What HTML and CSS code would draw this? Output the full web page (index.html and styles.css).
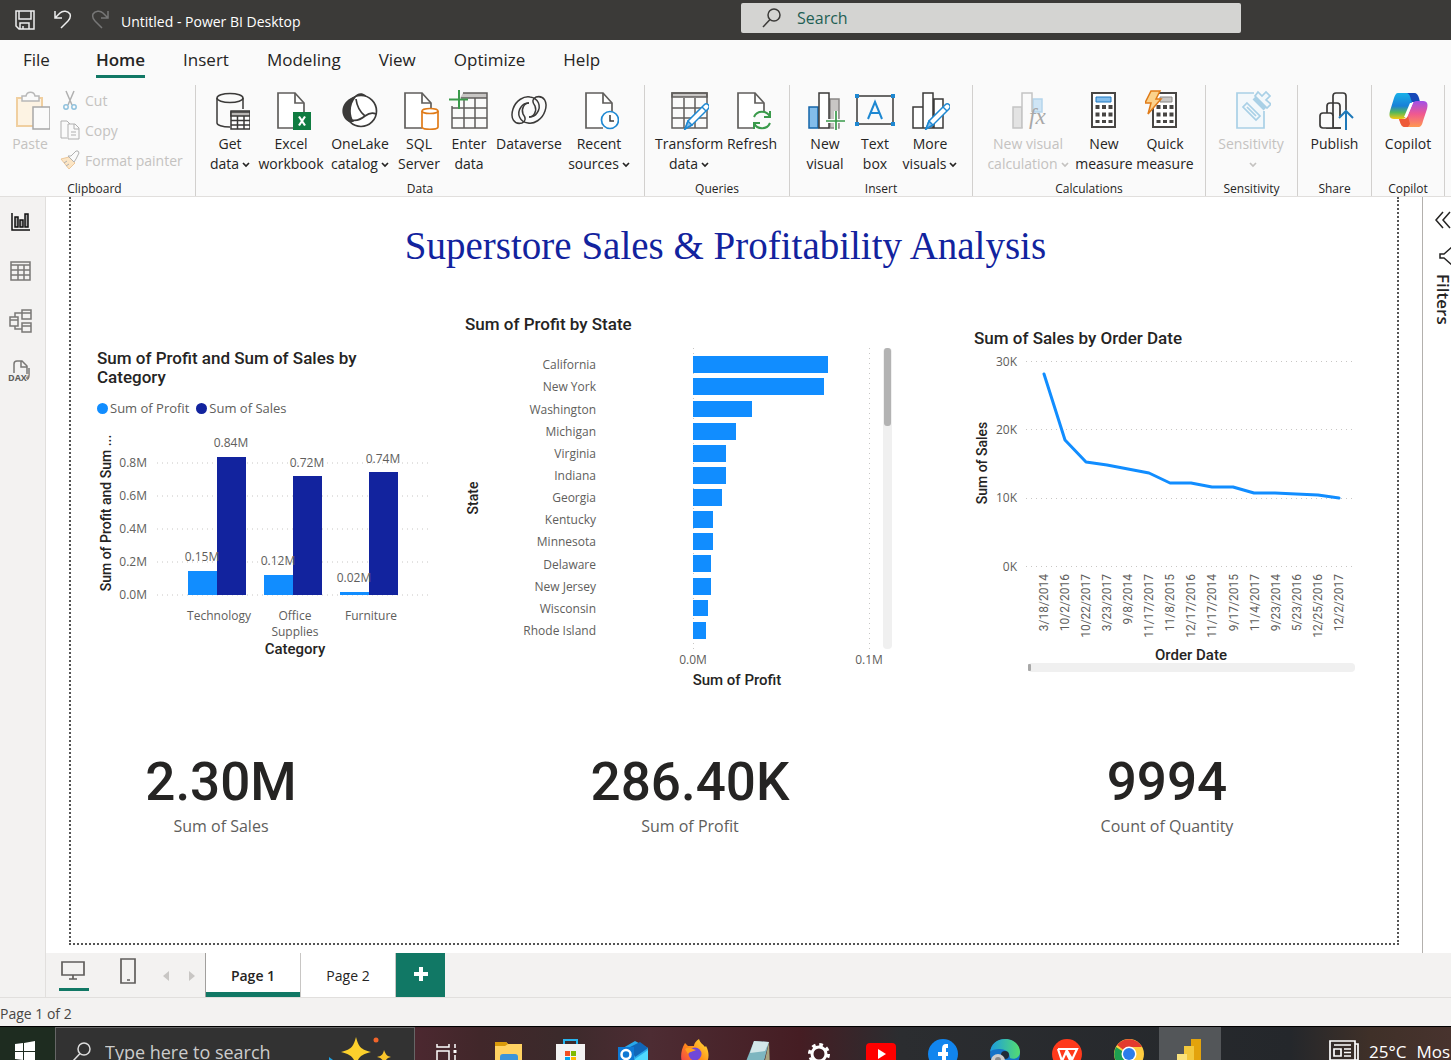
FILE: index.html
```html
<!DOCTYPE html>
<html lang="en">
<head>
<meta charset="utf-8">
<title>Untitled - Power BI Desktop</title>
<link rel="stylesheet" href="styles.css">
</head>
<body>
<svg class="defs" aria-hidden="true">
  <symbol id="chev" viewBox="0 0 8 6"><path d="M1 1l3 3 3-3" fill="none" stroke="currentColor" stroke-width="1.700"/></symbol>
  <symbol id="doc" viewBox="0 0 40 40"><path d="M24 38H7V3h17l9 10v10" fill="#fff" stroke="#605e5c" stroke-width="1.700"/><path d="M24 3v10h9" fill="none" stroke="#605e5c" stroke-width="1.700"/></symbol>
  <symbol id="lens" viewBox="0 0 20 20"><circle cx="12" cy="7" r="6" fill="none" stroke="currentColor" stroke-width="1.500"/><path d="M8 11.500L1 19" stroke="currentColor" stroke-width="1.500"/></symbol>
  <symbol id="pencil" viewBox="0 0 40 40"><path d="M16 39l3-8 16-16c3-3 7 1 4 4L23 35z" fill="#fff" stroke="#1e88d2" stroke-width="1.500"/><path d="M16 39l3-8 4 4z" fill="#83bdeb" stroke="#1e88d2"/><path d="M33 17l4 4" stroke="#1e88d2"/></symbol>
  <symbol id="swirl" viewBox="0 0 40 40"><path d="M13 33c-8 2-12-5-9-14C7 10 15 6 21 7c8 1 12 9 7 16-2 3-5 4-8 4M13 33c4-2 4-5 1-9-2-5 1-11 6-11" fill="none" stroke="#3b3a39" stroke-width="1.500"/></symbol>
</svg>

<header class="titlebar">
  <div class="quick">
    <button aria-label="Save"><svg width="20" height="20" viewBox="0 0 20 20" fill="none" stroke="#eee" stroke-width="1.500"><path d="M1 1h18v18H4l-3-3zM4 1v8h12V1M5 19v-6h9v6M8 16v3"/></svg></button>
    <button aria-label="Undo"><svg width="18" height="20" viewBox="0 0 18 20" fill="none" stroke="#eee" stroke-width="1.500"><path d="M1 1v7h7M1 8l5-5c3-3 8-2 10 1 1 3 0 5-2 7l-7 7"/></svg></button>
    <button aria-label="Redo"><svg width="18" height="20" viewBox="0 0 18 20" fill="none" stroke="#777" stroke-width="1.500"><path d="M17 1v7h-7M17 8l-5-5C9 0 4 1 2 4c-1 3 0 5 2 7l7 7"/></svg></button>
  </div>
  <span class="doc-name">Untitled - Power BI Desktop</span>
  <label class="search"><svg width="20" height="20"><use href="#lens"/></svg><input type="search" placeholder="Search" aria-label="Search"></label>
</header>

<nav class="tabs">
  <a href="#" class="file">File</a><a href="#" class="on">Home</a><a href="#">Insert</a><a href="#">Modeling</a><a href="#">View</a><a href="#">Optimize</a><a href="#">Help</a>
</nav>

<section class="ribbon">
  <div class="group g-clip">
    <div class="tools">
      <button class="tool w60" disabled><svg viewBox="0 0 40 40"><path d="M7 8h25v28H7z" fill="#fdf3e3" stroke="#f0cfa0" stroke-width="2"/><path d="M12 11V6h4c1-5 8-5 9 0h4v5z" fill="#fafafa" stroke="#b8b8b8" stroke-width="1.500"/><path d="M23 17h17v22H23z" fill="#fafafa" stroke="#a8a8a8" stroke-width="1.500"/></svg>Paste</button>
      <div class="stack">
        <button disabled><svg width="20" height="20" viewBox="0 0 20 20" fill="none"><path d="M6 1l6 14M14 1L8 15" stroke="#b0b0b0" stroke-width="1.500"/><circle cx="6" cy="17" r="2.200" stroke="#8fc1dd" stroke-width="1.500"/><circle cx="14" cy="17" r="2.200" stroke="#8fc1dd" stroke-width="1.500"/></svg>Cut</button>
        <button disabled><svg width="20" height="20" viewBox="0 0 20 20" fill="#fafafa" stroke="#b0b0b0"><path d="M7 18H1V1h6l3 3M8 4h7l4 4v11H8zM14 4v5h5M11 12h5M11 15h5"/></svg>Copy</button>
        <button disabled><svg width="20" height="20" viewBox="0 0 20 20"><path d="M1 9l8-2 6 6-6 6z" fill="#fbe5c5" stroke="#ecc79a"/><path d="M8 6l6 6 2-3 3-6-1-2-2 0-5 5zM4 13l3-2M6 16l3-2" fill="#fafafa" stroke="#b0b0b0"/></svg>Format painter</button>
      </div>
    </div>
    <h2>Clipboard</h2>
  </div>

  <div class="group g-data">
    <div class="tools">
      <button class="tool w52"><svg viewBox="0 0 40 40" fill="none" stroke="#3b3a39" stroke-width="1.500"><path d="M20 37C12 37 7 35 7 33V8M33 8v11"/><ellipse cx="20" cy="8" rx="13" ry="4.500"/><path d="M21 21h19v18H21z" fill="#fff"/><path d="M21 22h19v4H21z" fill="#b8b6b4"/><path d="M21 30.500h19M21 35h19M27.500 26v13M34 26v13"/></svg>Get<br><span>data<svg class="chev"><use href="#chev"/></svg></span></button>
      <button class="tool w70"><svg viewBox="0 0 40 40"><use href="#doc"/><path d="M22 22h18v18H22z" fill="#107c41"/><path d="M28 26.500l6 9M34 26.500l-6 9" stroke="#fff" stroke-width="2.200"/></svg>Excel<br>workbook</button>
      <button class="tool w68"><svg viewBox="0 0 40 40"><path d="M14 7c4-6 12-5 15 3z" fill="#3b3a39"/><circle cx="21" cy="21" r="15.500" fill="#fff" stroke="#3b3a39" stroke-width="1.700"/><path d="M14 7C0 11-1 27 9 32h5c-5-8-4-18 2-25z" fill="#3b3a39"/><path d="M16 9c1 8 4 13 9 17M36 24c-4-2-7-1-11 2-5 4-9 5-13 4" fill="none" stroke="#3b3a39" stroke-width="1.700"/></svg>OneLake<br><span>catalog<svg class="chev"><use href="#chev"/></svg></span></button>
      <button class="tool w50"><svg viewBox="0 0 40 40"><use href="#doc" x="-1"/><path d="M23 21v16c0 3 16 3 16 0V21" fill="#fff" stroke="#e07b18" stroke-width="1.700"/><ellipse cx="31" cy="21" rx="8" ry="2.500" fill="#fff" stroke="#e07b18" stroke-width="1.700"/></svg>SQL<br>Server</button>
      <button class="tool w50"><svg viewBox="0 0 40 40" fill="none" stroke="#605e5c" stroke-width="1.500"><path d="M14 3h24v5H11z" fill="#c8c6c4" stroke="none"/><path d="M14 3h24v35H3V16M12 8h26M3 18h35M3 28h35M15 10v28M26 8v30"/><path d="M10 0v19M0 9.500h19" stroke="#3a9a4b" stroke-width="2"/></svg>Enter<br>data</button>
      <button class="tool w70"><svg viewBox="0 0 40 40"><use href="#swirl"/><use href="#swirl" transform="rotate(180 20 20)"/></svg>Dataverse</button>
      <button class="tool w70"><svg viewBox="0 0 40 40"><use href="#doc"/><circle cx="31" cy="30" r="8.500" fill="#fff" stroke="#1e88d2" stroke-width="1.700"/><path d="M31 25v6h4" fill="none" stroke="#3b3a39" stroke-width="1.500"/></svg>Recent<br><span>sources<svg class="chev"><use href="#chev"/></svg></span></button>
    </div>
    <h2>Data</h2>
  </div>

  <div class="group g-query">
    <div class="tools">
      <button class="tool w68"><svg viewBox="0 0 40 40" fill="none" stroke="#605e5c" stroke-width="1.500"><path d="M3 3h35v4H3z" fill="#c8c6c4"/><path d="M3 3h35v35H3zM3 18h35M3 28h35M15 8v30M26 8v30"/><use href="#pencil"/></svg>Transform<br><span>data<svg class="chev"><use href="#chev"/></svg></span></button>
      <button class="tool w58"><svg viewBox="0 0 40 40"><use href="#doc" x="-1"/><circle cx="30" cy="30" r="9" fill="#fafafa"/><path d="M22 27c3-7 13-7 16 0M38 21v6h-6M38 33c-3 7-13 7-16 0M22 39v-6h6" fill="none" stroke="#3a9a4b" stroke-width="2"/></svg>Refresh</button>
    </div>
    <h2>Queries</h2>
  </div>

  <div class="group g-insert">
    <div class="tools">
      <button class="tool w50"><svg viewBox="0 0 40 40" fill="#fff" stroke="#3b3a39" stroke-width="1.500"><path d="M25 9h9v29h-9z" fill="#c8c6c4" stroke="#8a8886"/><path d="M4 17h9v21H4z" fill="#83bdeb" stroke="#1565a9"/><path d="M14 3h10v35H14z"/><path d="M31 21v19M21 31h19" stroke="#fafafa" stroke-width="4"/><path d="M31 21v19M21 31h19" stroke="#3a9a4b" stroke-width="1.700"/></svg>New<br>visual</button>
      <button class="tool w50"><svg viewBox="0 0 40 40"><path d="M2 6h36v28H2z" fill="#fafafa" stroke="#3b3a39" stroke-width="1.500"/><path d="M0 4h4v4H0zM36 4h4v4h-4zM0 32h4v4H0zM36 32h4v4h-4z" fill="#1e88d2"/><path d="M13 29l7-17 7 17M16 23h8" fill="none" stroke="#1e88d2" stroke-width="2"/></svg>Text<br>box</button>
      <button class="tool w60"><svg viewBox="0 0 40 40" fill="#fff" stroke="#3b3a39" stroke-width="1.500"><path d="M24 9h9v29h-9zM3 17h10v21H3zM13 3h10v35H13z"/><use href="#pencil"/></svg>More<br><span>visuals<svg class="chev"><use href="#chev"/></svg></span></button>
    </div>
    <h2>Insert</h2>
  </div>

  <div class="group g-calc">
    <div class="tools">
      <button class="tool w90" disabled><svg viewBox="0 0 40 40" fill="#fafafa" stroke="#c4c4c4" stroke-width="1.500"><path d="M25 9h9v13h-9z" fill="#cfe5f5" stroke="#b5d5ec"/><path d="M5 17h9v21H5z" fill="#e3e3e3"/><path d="M14 38V3h10v19"/><text x="21" y="34" font-size="23" font-style="italic" stroke="none" fill="#a8a8a8" class="fx">fx</text></svg>New visual<br><span>calculation<svg class="chev"><use href="#chev"/></svg></span></button>
      <button class="tool w62"><svg viewBox="0 0 40 40"><path d="M8 3h23v34H8z" fill="#fff" stroke="#484644" stroke-width="2"/><path d="M12 7h15v5H12z" fill="#83bdeb" stroke="#1e78c2"/><path d="M13.500 15v18M20 15v18M26.500 15v18" stroke="#484644" stroke-width="4" stroke-dasharray="4 3.500"/></svg>New<br>measure</button>
      <button class="tool w60"><svg viewBox="0 0 40 40"><path d="M8 3h23v34H8z" fill="#fff" stroke="#484644" stroke-width="2"/><path d="M15 7h12v5H15z" fill="#c8c6c4" stroke="#8a8886"/><path d="M13.500 15v18M20 15v18M26.500 15v18" stroke="#484644" stroke-width="4" stroke-dasharray="4 3.500"/><path d="M6 1h9l-4 8h5L3 24l3-11H0z" fill="#fbd28c" stroke="#e07b18" stroke-width="1.500"/></svg>Quick<br>measure</button>
    </div>
    <h2>Calculations</h2>
  </div>

  <div class="group g-sens">
    <div class="tools">
      <button class="tool w90" disabled><svg viewBox="0 0 40 40" fill="#f3f8fb" stroke="#a9d0e6" stroke-width="1.700"><path d="M23 3H6v35h27V21"/><path d="M16 13l13 13-4 4-13-13zM16 17l9 9"/><path d="M24 6l12 12 4-4-5-4 4-4-4-4-4 4-4-4z"/><path d="M23 8l11 11" stroke-width="4"/></svg>Sensitivity<br><span><svg class="chev"><use href="#chev"/></svg></span></button>
    </div>
    <h2>Sensitivity</h2>
  </div>

  <div class="group g-share">
    <div class="tools">
      <button class="tool w70"><svg viewBox="0 0 40 40" fill="#fafafa" stroke="#3b3a39" stroke-width="1.700"><path d="M26 38H18V6q0-3 3-3h7q3 0 3 3v14M24 38H12V16q0-3 3-3h7q3 0 3 3v10"/><path d="M8 23h7q3 0 3 3v12H8q-3 0-3-3v-9q0-3 3-3zM18 38h8"/><path d="M31 40V21M24 28l7-7 7 7" stroke="#1e78b8" stroke-width="2" fill="none"/></svg>Publish</button>
    </div>
    <h2>Share</h2>
  </div>

  <div class="group g-copilot">
    <div class="tools">
      <button class="tool w70"><svg viewBox="0 0 40 40"><defs><linearGradient id="ca" x1="0" y1="0" x2="0" y2="1"><stop offset="0" stop-color="#18b0e8"/><stop offset=".5" stop-color="#1880d8"/><stop offset=".75" stop-color="#58b858"/><stop offset="1" stop-color="#f8c810"/></linearGradient><linearGradient id="cb" x1="0" y1="0" x2="0" y2="1"><stop offset="0" stop-color="#a050e8"/><stop offset=".5" stop-color="#f05890"/><stop offset="1" stop-color="#ff9850"/></linearGradient></defs><path d="M10 3h15c3 0 4 2 5 5l1 4h-7l-6 14c-1 3-3 3-6 3H6c-5 0-5-4-4-8L6 8c1-3 2-5 4-5z" fill="url(#ca)"/><path d="M19 3h7c3 0 4 2 5 5l1 4h-8c-2-5-2-8-5-9z" fill="#1648b8"/><path d="M30 37H17c-3 0-4-2-5-5l-1-3h5c2 0 3-1 4-4l4-10c1-3 2-4 5-4h6c5 0 5 4 4 8l-4 12c-1 4-2 6-5 6z" fill="url(#cb)"/><path d="M11 29h5c2 0 3-1 4-3l2 8-2 3h-3c-3 0-4-2-6-8z" fill="#ee5a38"/><path d="M22 13h3l-6 14h-3z" fill="#fff"/></svg>Copilot</button>
    </div>
    <h2>Copilot</h2>
  </div>
</section>

<div class="workspace">
  <aside class="rail">
    <button aria-label="Report view"><svg width="26" height="22" viewBox="0 0 26 22" fill="#aaa" stroke="#111" stroke-width="1.500"><path d="M5 2v17h18" fill="none"/><path d="M8 6h3v10H8zM13 9h3v7h-3zM18 3h3v13h-3z"/></svg></button>
    <button aria-label="Table view"><svg width="26" height="22" viewBox="0 0 26 22" fill="none" stroke="#7a7876" stroke-width="1.500"><path d="M4 1h19v18H4zM4 4h19M4 9h19M4 14h19M11 4v15M17 4v15"/></svg></button>
    <button aria-label="Model view"><svg width="26" height="26" viewBox="0 0 26 26" fill="none" stroke="#7a7876" stroke-width="1.500"><path d="M3 8h8v9H3zM3 11h8M15 1h9v9h-9zM15 4h9M15 14h9v9h-9zM15 17h9M8 8V4h7M8 17v3h7"/></svg></button>
    <button aria-label="DAX query view"><svg width="26" height="24" viewBox="0 0 26 24" fill="none" stroke="#7a7876" stroke-width="1.500"><path d="M7 13V4q0-3 3-3h5l5 5v10q0 3-3 3M14 1v6h6M22 8v7q0 4-3 5"/><text x="1" y="21" font-size="9" font-weight="700" fill="#605e5c" stroke="#f3f2f1" stroke-width="2" paint-order="stroke">DAX</text></svg></button>
  </aside>

  <div class="content">
    <div class="stage">
      <main class="canvas">
        <h1>Superstore Sales &amp; Profitability Analysis</h1>
        <div class="visuals">
          <figure class="v-cat">
            <figcaption>Sum of Profit and Sum of Sales by Category</figcaption>
            <ul class="legend"><li class="profit">Sum of Profit</li><li class="sales">Sum of Sales</li></ul>
            <svg width="340" height="230" viewBox="97 430 340 230">
              <path class="grid" d="M157 463h272M157 496h272M157 529h272M157 562h272M157 595h272"/>
              <g class="tick end"><text x="147" y="467">0.8M</text><text x="147" y="500">0.6M</text><text x="147" y="533">0.4M</text><text x="147" y="566">0.2M</text><text x="147" y="599">0.0M</text></g>
              <path fill="#118dff" d="M188 571h29v24h-29zM264 575h29v20h-29zM340 592h29v3h-29z"/>
              <path fill="#12239e" d="M217 457h29v138h-29zM293 476h29v119h-29zM369 472h29v123h-29z"/>
              <g class="tick mid"><text x="202" y="561">0.15M</text><text x="231" y="447">0.84M</text><text x="278" y="565">0.12M</text><text x="307" y="467">0.72M</text><text x="354" y="582">0.02M</text><text x="383" y="463">0.74M</text>
              <text x="219" y="620">Technology</text><text x="295" y="620">Office</text><text x="295" y="636">Supplies</text><text x="371" y="620">Furniture</text></g>
              <text class="axis" x="295" y="654">Category</text>
              <text class="axis side" transform="translate(111 513) rotate(-90)">Sum of Profit and Sum ...</text>
            </svg>
          </figure>

          <figure class="v-state">
            <figcaption>Sum of Profit by State</figcaption>
            <svg width="440" height="350" viewBox="465 340 440 350">
              <path class="grid" d="M693.500 348v301M869.500 348v301"/>
              <g class="tick end"><text x="596" y="369">California</text><text x="596" y="391">New York</text><text x="596" y="414">Washington</text><text x="596" y="436">Michigan</text><text x="596" y="458">Virginia</text><text x="596" y="480">Indiana</text><text x="596" y="502">Georgia</text><text x="596" y="524">Kentucky</text><text x="596" y="546">Minnesota</text><text x="596" y="569">Delaware</text><text x="596" y="591">New Jersey</text><text x="596" y="613">Wisconsin</text><text x="596" y="635">Rhode Island</text></g>
              <path fill="#118dff" d="M693 356h135v17H693zM693 378h131v17H693zM693 401h59v16H693zM693 423h43v17H693zM693 445h33v17H693zM693 467h33v17H693zM693 489h29v17H693zM693 511h20v17H693zM693 533h20v17H693zM693 555h18v17H693zM693 578h18v17H693zM693 600h15v16H693zM693 622h13v17H693z"/>
              <g class="tick mid"><text x="693" y="664">0.0M</text><text x="869" y="664">0.1M</text></g>
              <text class="axis" x="737" y="685">Sum of Profit</text>
              <text class="axis side" transform="translate(478 498) rotate(-90)">State</text>
              <rect x="883" y="348" width="9" height="301" rx="4" fill="#f0f0f0"/><rect x="884" y="348" width="7" height="78" rx="3" fill="#b3b3b3"/>
            </svg>
          </figure>

          <figure class="v-date">
            <figcaption>Sum of Sales by Order Date</figcaption>
            <svg width="396" height="326" viewBox="974 352 396 326">
              <path class="grid" d="M1026 361.500h329M1026 429.500h329M1026 498.500h329M1026 566.500h329"/>
              <g class="tick end"><text x="1017" y="366">30K</text><text x="1017" y="434">20K</text><text x="1017" y="502">10K</text><text x="1017" y="571">0K</text></g>
              <path fill="none" stroke="#118dff" stroke-width="3" stroke-linejoin="round" stroke-linecap="round" d="M1044 374L1065 440L1086 462L1107 465L1128 469L1149 473L1170 483L1191 483L1212 487L1233 487L1254 493L1275 493L1296 494L1318 495L1339 498"/>
              <g class="dates">
                <text transform="translate(1048 574) rotate(-90)">3/18/2014</text><text transform="translate(1069 574) rotate(-90)">10/2/2016</text><text transform="translate(1090 574) rotate(-90)">10/22/2017</text><text transform="translate(1111 574) rotate(-90)">3/23/2017</text><text transform="translate(1132 574) rotate(-90)">9/8/2014</text><text transform="translate(1153 574) rotate(-90)">11/17/2017</text><text transform="translate(1174 574) rotate(-90)">11/8/2015</text><text transform="translate(1195 574) rotate(-90)">12/17/2016</text><text transform="translate(1216 574) rotate(-90)">11/17/2014</text><text transform="translate(1238 574) rotate(-90)">9/17/2015</text><text transform="translate(1259 574) rotate(-90)">11/4/2017</text><text transform="translate(1280 574) rotate(-90)">9/23/2014</text><text transform="translate(1301 574) rotate(-90)">5/23/2016</text><text transform="translate(1322 574) rotate(-90)">12/25/2016</text><text transform="translate(1343 574) rotate(-90)">12/2/2017</text>
              </g>
              <text class="axis" x="1191" y="660">Order Date</text>
              <text class="axis side" transform="translate(987 463) rotate(-90)">Sum of Sales</text>
              <rect x="1028" y="663" width="327" height="9" rx="4" fill="#f0f0f0"/><rect x="1028" y="664" width="3" height="7" rx="1" fill="#a8a8a8"/>
            </svg>
          </figure>
        </div>
        <div class="cards">
          <div class="card c1"><strong>2.30M</strong><span>Sum of Sales</span></div>
          <div class="card c2"><strong>286.40K</strong><span>Sum of Profit</span></div>
          <div class="card c3"><strong>9994</strong><span>Count of Quantity</span></div>
        </div>
      </main>
      <aside class="filters">
        <button aria-label="Expand filters"><svg width="18" height="18" viewBox="0 0 18 18" fill="none" stroke="#252423" stroke-width="1.500"><path d="M8 1L1 9l7 8M15 1L8 9l7 8"/></svg></button>
        <svg class="funnel" width="18" height="18" viewBox="0 0 18 18" fill="none" stroke="#252423" stroke-width="1.500"><path d="M1 7v4h4l8 7h3V0h-3L5 7z"/></svg>
        <span>Filters</span>
      </aside>
    </div>
    <nav class="pagebar">
      <button class="device on" aria-label="Desktop layout"><svg width="30" height="22" viewBox="0 0 30 22" fill="none" stroke="#605e5c" stroke-width="1.700"><path d="M3 2h22v13H3zM14 15v4M10 19h8"/></svg></button>
      <button class="device phone" aria-label="Mobile layout"><svg width="18" height="26" viewBox="0 0 18 26" fill="none" stroke="#605e5c" stroke-width="1.700"><path d="M2 1h14v24H2zM8 22h3"/></svg></button>
      <button class="arrow" aria-label="Previous page"><svg width="8" height="10"><path d="M7 0v10L1 5z" fill="#c8c6c4"/></svg></button>
      <button class="arrow" aria-label="Next page"><svg width="8" height="10"><path d="M1 0v10l6-5z" fill="#c8c6c4"/></svg></button>
      <button class="page on">Page 1</button><button class="page">Page 2</button>
      <button class="add" aria-label="New page"><svg width="14" height="14"><path d="M7 0v14M0 7h14" stroke="#fff" stroke-width="4"/></svg></button>
    </nav>
  </div>
</div>

<footer class="status">Page 1 of 2</footer>

<div class="taskbar">
  <button class="start" aria-label="Start"><svg width="20" height="20" viewBox="0 0 20 20" fill="#fff"><path d="M0 3l8-1v8H0zM9 2l11-2v10H9zM0 11h8v8l-8-1zM9 11h11v9L9 19z"/></svg></button>
  <label class="find"><svg width="20" height="20"><use href="#lens"/></svg><input type="text" placeholder="Type here to search" aria-label="Type here to search">
    <svg class="spark" width="66" height="26" viewBox="0 0 66 26"><path d="M31 0c3 11 5 12 15 15-10 3-12 4-15 13-3-9-5-10-15-13 10-3 12-4 15-15z" fill="#fcd02c"/><path d="M59 13c2 5 3 6 7 7-4 1-5 2-7 7-1-5-3-6-7-7 4-1 6-2 7-7z" fill="#fbc52a"/><circle cx="51" cy="3" r="2.500" fill="#f2642a"/><path d="M4 20l4 3-4 5z" fill="#1ea0e0"/></svg></label>
  <button class="app" aria-label="Task view"><svg viewBox="0 0 30 30" fill="none" stroke="#fff" stroke-width="1.500"><path d="M5 5v3h12V5M5 12h12v10H5zM5 26v-2h12v2M23 5v4M23 16v14"/><path d="M21.500 11h3v3h-3z" fill="#fff" stroke="none"/></svg></button>
  <button class="app" aria-label="File Explorer"><svg viewBox="0 0 30 30"><path d="M1 3h11l2 2h14v25H1z" fill="#ffd262"/><path d="M1 3h11l2 2-3 2H1z" fill="#d99a0a"/><path d="M6 30V18q0-3 3-3h12q3 0 3 3v12h-5v-9h-8v9z" fill="#3b94d9"/></svg></button>
  <button class="app" aria-label="Microsoft Store"><svg viewBox="0 0 30 30"><path d="M8 6V1h13v5" fill="none" stroke="#28b4ee" stroke-width="2"/><path d="M0 5h29v25H0z" fill="#f3f3f3"/><path d="M9 12h5v5H9z" fill="#f25022"/><path d="M15 12h5v5h-5z" fill="#7fba00"/><path d="M9 18h5v5H9z" fill="#00a4ef"/><path d="M15 18h5v5h-5z" fill="#ffb900"/></svg></button>
  <button class="app" aria-label="Outlook"><svg viewBox="0 0 30 30"><path d="M5 9L17 2l13 7v21H5z" fill="#28a8ea"/><path d="M12 8l10-5 8 6-13 9z" fill="#1066b8"/><path d="M17 20l13-9v19H17z" fill="#50d9ff"/><path d="M0 8h16v20H0z" fill="#0f78d4"/><circle cx="8" cy="15.500" r="4.500" fill="none" stroke="#fff" stroke-width="2.500"/></svg></button>
  <button class="app" aria-label="Firefox"><svg viewBox="0 0 30 30"><defs><linearGradient id="ff" x1="1" y1="0" x2="0" y2="1"><stop offset="0" stop-color="#ffe83a"/><stop offset=".5" stop-color="#ff8a18"/><stop offset="1" stop-color="#f02860"/></linearGradient></defs><path d="M5 4l3 3h6c0-3 2-5 5-7 1 4 4 5 6 8l1-1c4 7 3 15-1 19-5 5-15 6-21 0C0 22 0 12 5 4z" fill="url(#ff)"/><circle cx="15" cy="15" r="6.500" fill="#7048d8"/><path d="M5 10c4-3 8 0 11 1-3 2-6 1-8 4" fill="#ffa020"/></svg></button>
  <button class="app" aria-label="Notepad"><svg viewBox="0 0 30 30"><path d="M12 2l15 1-7 27H1z" fill="#7eb6c0"/><path d="M12 2l15 1-4 9L8 14z" fill="#d3e7e9"/><path d="M27 3l-6 27h7z" fill="#a9a580"/></svg></button>
  <button class="app" aria-label="Settings"><svg viewBox="0 0 30 30" fill="none" stroke="#fff"><circle cx="15" cy="15" r="7" stroke-width="3"/><circle cx="15" cy="15" r="9.500" stroke-width="3" stroke-dasharray="3.700 3.760"/></svg></button>
  <button class="app" aria-label="YouTube"><svg viewBox="0 0 30 30"><rect y="4" width="30" height="23" rx="4" fill="#f00"/><path d="M12 10l8 5-8 5z" fill="#fff"/></svg></button>
  <button class="app" aria-label="Facebook"><svg viewBox="0 0 30 30"><circle cx="15" cy="15" r="15" fill="#1185ee"/><path d="M20 7h-2q-2 0-2 3v20M10 15h10" fill="none" stroke="#fff" stroke-width="4"/></svg></button>
  <button class="app" aria-label="Edge"><svg viewBox="0 0 30 30"><defs><linearGradient id="ed"><stop offset="0" stop-color="#1c9be0"/><stop offset="1" stop-color="#54dd70"/></linearGradient></defs><circle cx="15" cy="15" r="15" fill="#1473c8"/><path d="M0 13C1 5 7 0 15 0c9 0 15 6 15 13 0 6-6 8-10 6 0-5-4-9-10-9-5 0-9 1-10 3z" fill="url(#ed)"/><circle cx="15" cy="16" r="4" fill="#1f2b38"/><circle cx="8" cy="22" r="7" fill="#ccc"/><circle cx="8" cy="21" r="3" fill="#888"/></svg></button>
  <button class="app" aria-label="WPS Office"><svg viewBox="0 0 30 30"><circle cx="15" cy="15" r="15" fill="#ff3a1c"/><path d="M6 10h19l-6 13-5-10-4 9-4-12M14 10l6 10" fill="none" stroke="#fff" stroke-width="2.200"/></svg></button>
  <button class="app" aria-label="Chrome"><svg viewBox="0 0 30 30"><circle cx="15" cy="15" r="15" fill="#ffcd40"/><path d="M15 15L3 6A15 15 0 0 1 28 8H15z" fill="#e33b2e"/><path d="M2 8a15 15 0 0 0 12 22l5-11z" fill="#1ea050"/><circle cx="15" cy="15" r="7.500" fill="#fff"/><circle cx="15" cy="15" r="6" fill="#2b7de9"/></svg></button>
  <button class="app on" aria-label="Power BI"><svg viewBox="0 0 30 30"><path d="M15 0h10v30H15z" fill="#e3a30c"/><path d="M8 7h10v23H8z" fill="#f3c83c"/><path d="M1 15h10v15H1z" fill="#fae27c"/></svg></button>
  <a href="#" class="weather"><svg width="30" height="22" viewBox="0 0 30 22" fill="none" stroke="#fff" stroke-width="1.700"><path d="M1 1h25v19H1zM26 4h3v16h-4M5 9h7v7H5zM5 5h17M15 9h7M15 12.500h7M15 16h7"/></svg><span>25°C</span><span>Mos</span></a>
</div>
</body>
</html>
```

FILE: styles.css
```css
* { box-sizing: border-box; }
body {
  margin: 0;
  min-height: 100vh;
  display: flex;
  flex-direction: column;
  font-family: "Open Sans", "Noto Sans", sans-serif;
  font-size: 14px;
  color: #252423;
  background: #f3f2f1;
  overflow-x: hidden;
}
button { font: inherit; color: inherit; background: none; border: 0; padding: 0; }
a { color: inherit; text-decoration: none; }
h1, h2, figure, ul { margin: 0; padding: 0; font-weight: 400; }
svg { flex: none; }
.defs { display: none; }

/* title bar */
.titlebar { display: flex; align-items: center; height: 40px; padding-left: 15px; background: #3b3a38; color: #fff; }
.quick { display: flex; gap: 19px; width: 106px; height: 22px; }
.quick svg { display: block; }
.doc-name { flex: 0 0 620px; line-height: 20px; padding-top: 3px; }
.search { display: flex; align-items: center; flex: 0 1 500px; height: 30px; margin-bottom: 4px; padding-left: 21px; gap: 15px; background: #d4d4d2; border-radius: 2px; color: #3b3a38; }
input { flex: 1; min-width: 0; border: 0; padding: 0; background: none; font: inherit; outline: 0; }
.search input { font-size: 16px; }
.search input::placeholder { color: #1f5f54; }

/* ribbon tabs */
.tabs { display: flex; gap: 38px; height: 42px; padding-left: 23px; background: #fafafa; font-size: 17px; }
.tabs a { height: 38px; line-height: 40px; }
.tabs .file { margin-right: 8px; }
.tabs .on { font-weight: 600; border-bottom: 3px solid #117865; }

/* ribbon */
.ribbon { display: flex; padding-top: 3px; height: 115px; background: #fafafa; border-bottom: 1px solid #e1dfdd; }
.group { display: flex; flex-direction: column; justify-content: space-between; border-right: 1px solid #d2d0ce; flex: none; }
.group h2 { font-size: 12px; line-height: 14px; text-align: center; }
.tools { display: flex; align-items: flex-start; }
.tool { display: block; font-size: 14px; line-height: 20px; white-space: nowrap; text-align: center; flex: none; }
.tool > svg { display: block; width: 40px; height: 40px; margin: 5px auto 4px; }
.tool:disabled, .stack button:disabled { color: #c4c2c0; }
.chev { width: 8px; height: 6px; margin: 0 0 1px 3px; }
.fx { font-family: "Liberation Serif", serif; }
.stack button { display: flex; align-items: center; height: 30px; gap: 5px; white-space: nowrap; }
.w50 { width: 50px; } .w52 { width: 52px; } .w58 { width: 58px; } .w60 { width: 60px; } .w62 { width: 62px; }
.w68 { width: 68px; } .w70 { width: 70px; } .w90 { width: 90px; }
.g-clip { width: 196px; }
.g-clip h2 { padding-right: 6px; }
.g-data { width: 449px; } .g-data .tools { padding-left: 8px; }
.g-query { width: 145px; } .g-query .tools { padding-left: 10px; }
.g-insert { width: 183px; } .g-insert .tools { padding-left: 10px; }
.g-calc { width: 233px; } .g-calc .tools { padding-left: 10px; }
.g-sens { width: 92px; }
.g-share { width: 74px; }
.g-copilot { width: 73px; }
.g-share .tools, .g-copilot .tools { justify-content: center; }

/* workspace */
.workspace { flex: 1; display: flex; }
.rail { display: flex; flex-direction: column; gap: 24px; width: 46px; padding: 12px 0 0 7px; border-right: 1px solid #e1dfdd; }
.rail button { height: 26px; text-align: left; }
.rail svg { display: block; }
.content { flex: 1; display: flex; flex-direction: column; min-width: 0; }
.stage { flex: 1; display: flex; background: #fff; }
.canvas { flex: 1; margin: 0 23px 8px; border: 2px dotted #555; border-top: 0; }
.canvas h1 { padding: 27px 17px 0 0; text-align: center; font: 39px/44px "Liberation Serif", serif; color: #12239e; }
.visuals, .cards { display: grid; grid-template-columns: 368fr 509fr 423fr; padding-left: 26px; }
.visuals { padding-top: 47px; height: 427px; }
figure svg { display: block; }
figcaption { font: 500 17px/19px Roboto, sans-serif; }
.v-cat { padding-top: 34px; width: 340px; }
.v-cat figcaption { width: 280px; }
.v-state figcaption { padding-bottom: 6px; }
.v-date { padding-top: 14px; }
.v-date figcaption { padding-bottom: 4px; }
.legend { display: flex; align-items: flex-start; gap: 7px; height: 43px; padding-top: 12px; list-style: none; font-size: 13px; line-height: 18px; color: #605e5c; }
.legend li { display: flex; align-items: center; gap: 2px; }
.legend li::before { content: ""; width: 11px; height: 11px; border-radius: 50%; background: #118dff; }
.legend .sales::before { background: #12239e; }
.grid { fill: none; stroke: #c8c6c4; stroke-dasharray: 1 4; }
.tick { font-size: 12px; fill: #605e5c; }
.end, .dates { text-anchor: end; }
.mid, .axis { text-anchor: middle; }
.dates { font: 12px Roboto, sans-serif; fill: #605e5c; }
.axis { font: 500 15px Roboto, sans-serif; fill: #252423; }
.side { font-size: 14px; }
.cards { padding-top: 55px; }
.card { display: flex; flex-direction: column; align-items: center; }
.card strong { font: 500 53px/64px Roboto, sans-serif; }
.card span { font-size: 16px; line-height: 24px; color: #605e5c; }
.c1 { width: 248px; } .c2 { width: 450px; } .c3 { width: 386px; }

.filters { display: flex; flex-direction: column; width: 29px; border-left: 1px solid #b3b0ad; padding: 14px 0 0 12px; font-size: 17px; font-weight: 600; }
.filters button { height: 18px; text-align: left; }
.filters svg { display: block; }
.filters .funnel { margin: 18px 0 9px 4px; }
.filters span { writing-mode: vertical-rl; line-height: 16px; }

/* page tabs */
.pagebar { display: flex; height: 44px; }
.device { height: 38px; width: 30px; margin-left: 13px; border-bottom: 3px solid transparent; }
.device.on { border-color: #117865; }
.device svg { display: block; margin: auto; }
.phone { margin: 0 10px 0 24px; }
.arrow { width: 26px; }
.page { width: 95px; background: #fff; border-right: 1px solid #c8c6c4; }
.page.on { width: 96px; font-weight: 600; border-left: 1px solid #a19f9d; box-shadow: inset 0 -5px #117865; }
.add { width: 49px; background: #117865; }

.status { height: 29px; padding-top: 6px; line-height: 20px; border-top: 1px solid #e1dfdd; color: #484644; }

/* taskbar */
.taskbar { display: flex; height: 34px; overflow: hidden; border-top: 1px solid #000; background: linear-gradient(90deg, #1e2c20 0 55px, #4c2830 414px, #41272a 480px, #3b2a2b 560px, #4d2c33 650px, #451d23 800px, #2b2d30 900px, #24272b 1290px, #3f3028 1370px, #48332e); }
.start { width: 55px; padding: 14px 0 0 15px; text-align: left; flex: none; }
.start svg, .app svg { display: block; }
.find { display: flex; width: 360px; flex: none; padding: 0 23px 0 16px; gap: 13px; background: #323232; border: 1px solid #666; border-bottom: 0; color: #ddd; font-size: 18px; }
.find svg { margin-top: 14px; }
.find input { height: 24px; margin-top: 12px; }
.find input::placeholder { color: #ccc; opacity: 1; }
.find .spark { margin-top: 9px; }
.app { width: 62px; flex: none; padding: 10px 15px 0 17px; height: 44px; }
.app svg { width: 30px; height: 30px; }
.app.on { background: #535659; }
.weather { display: flex; flex: none; width: 122px; margin-left: auto; gap: 10px; padding-top: 13px; font-size: 17px; line-height: 24px; color: #fff; }
```
